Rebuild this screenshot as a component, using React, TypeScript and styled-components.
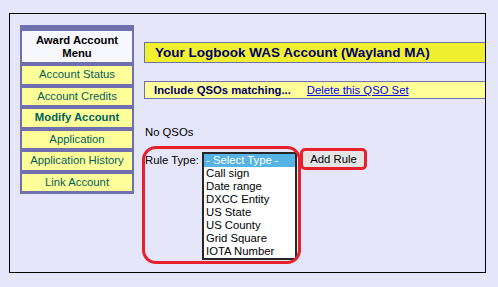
import React from 'react';
import styled, { createGlobalStyle } from 'styled-components';

const Global = createGlobalStyle`
  html, body { margin: 0; padding: 0; background: #e6e6fa; }
  body {
    font-family: "Liberation Sans", Arial, sans-serif;
    font-size: 11.3px;
    color: #000;
  }
  * { box-sizing: border-box; }
`;

const Page = styled.div`
  padding: 13px 0 0 9px;
`;

const Frame = styled.div`
  width: 477px;
  height: 260px;
  border: 1px solid #000;
  overflow: hidden;
  display: flex;
  align-items: flex-start;
  gap: 10px;
  padding: 11px 0 0 10px;
`;

const Menu = styled.nav`
  flex: 0 0 114px;
  background: #7070b0;
  padding: 6px 2px 3px 2px;
  display: flex;
  flex-direction: column;
  gap: 4px;
`;

const MenuHeader = styled.div`
  height: 31px;
  background: #f8f8ff;
  font-weight: bold;
  line-height: 13px;
  display: flex;
  align-items: center;
  justify-content: center;
  text-align: center;
`;

const MenuItem = styled.div<{ $current?: boolean }>`
  height: 17.5px;
  line-height: 17.5px;
  background: #ffff99;
  color: #006060;
  text-align: center;
  font-weight: ${(p) => (p.$current ? 'bold' : 'normal')};
  white-space: nowrap;
`;

const Main = styled.main`
  flex: 1 1 auto;
  min-width: 0;
  margin-top: 17px;
  display: flex;
  flex-direction: column;
  align-items: flex-start;
`;

const TitleBar = styled.h1`
  margin: 0;
  width: 380px;
  flex-shrink: 0;
  height: 21px;
  border: 1px solid #7070b0;
  background: #f0f030;
  color: #000066;
  font-size: 13.5px;
  font-weight: bold;
  line-height: 19px;
  padding-left: 10px;
  white-space: nowrap;
`;

const IncludeBar = styled.div`
  margin-top: 18px;
  width: 380px;
  flex-shrink: 0;
  height: 18px;
  border: 1px solid #7070b0;
  background: #ffff99;
  color: #000066;
  font-weight: bold;
  line-height: 16px;
  padding-left: 9px;
  white-space: nowrap;
`;

const Link = styled.a`
  margin-left: 16px;
  font-weight: normal;
  color: #0000ee;
  text-decoration: underline;
`;

const Note = styled.div`
  margin-top: 27px;
  line-height: 13px;
  padding-left: 1px;
`;

const RuleRow = styled.div`
  position: relative;
  margin-top: 13px;
  display: flex;
  align-items: flex-start;
`;

const Label = styled.label`
  flex: 0 0 58px;
  padding-left: 1px;
  margin-top: 2px;
  line-height: 13px;
  white-space: nowrap;
`;

const ListBox = styled.div`
  width: 95px;
  border: 2px solid #262626;
  background: #fff;
  display: flex;
  flex-direction: column;
`;

const Option = styled.div<{ $selected?: boolean }>`
  height: 13px;
  line-height: 13px;
  padding-left: 2px;
  white-space: nowrap;
  background: ${(p) => (p.$selected ? '#56b4e4' : 'transparent')};
  color: ${(p) => (p.$selected ? '#fff' : '#000')};
`;

const ButtonWrap = styled.span`
  position: relative;
  margin-left: 5px;
  margin-top: -3px;
  display: inline-flex;
`;

const Button = styled.button`
  width: 63px;
  height: 20px;
  padding: 0;
  background: #e4e4e4;
  border: 1px solid #a0a0a0;
  font-family: inherit;
  font-size: 11.3px;
  color: #000;
  line-height: 18px;
`;

const Annotation = styled.span<{ $radius: number }>`
  position: absolute;
  border: 3px solid #e8202c;
  border-radius: ${(p) => p.$radius}px;
  pointer-events: none;
`;

const menuItems = [
  'Account Status',
  'Account Credits',
  'Modify Account',
  'Application',
  'Application History',
  'Link Account',
];

const options = [
  '- Select Type -',
  'Call sign',
  'Date range',
  'DXCC Entity',
  'US State',
  'US County',
  'Grid Square',
  'IOTA Number',
];

export default function App() {
  return (
    <>
      <Global />
      <Page>
        <Frame>
          <Menu>
            <MenuHeader>
              Award Account
              <br />
              Menu
            </MenuHeader>
            {menuItems.map((m) => (
              <MenuItem key={m} $current={m === 'Modify Account'}>
                {m}
              </MenuItem>
            ))}
          </Menu>
          <Main>
            <TitleBar>Your Logbook WAS Account (Wayland MA)</TitleBar>
            <IncludeBar>
              Include QSOs matching...
              <Link href="#">Delete this QSO Set</Link>
            </IncludeBar>
            <Note>No QSOs</Note>
            <RuleRow>
              <Label>Rule Type:</Label>
              <ListBox>
                {options.map((o, i) => (
                  <Option key={o} $selected={i === 0}>
                    {o}
                  </Option>
                ))}
              </ListBox>
              <ButtonWrap>
                <Button>Add Rule</Button>
                <Annotation $radius={5} style={{ left: -2, top: -1, width: 67, height: 22 }} />
              </ButtonWrap>
              <Annotation $radius={14} style={{ left: -2, top: -6, width: 159, height: 118 }} />
            </RuleRow>
          </Main>
        </Frame>
      </Page>
    </>
  );
}
